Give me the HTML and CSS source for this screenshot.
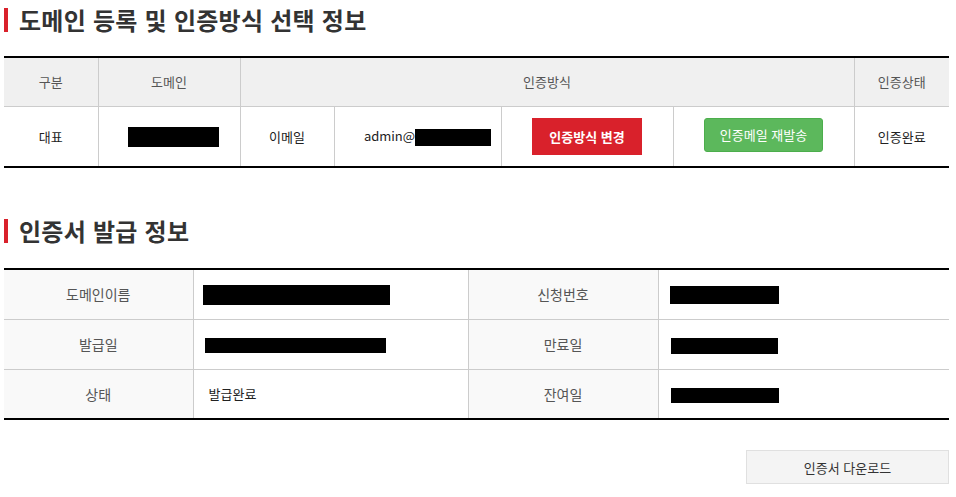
FILE: index.html
```html
<!DOCTYPE html>
<html lang="ko">
<head>
  <meta charset="UTF-8">
  <title>인증서 정보</title>
  <link rel="stylesheet" href="styles.css">
</head>
<body>

  <div class="page">
    <h2 class="sec-title">도메인 등록 및 인증방식 선택 정보</h2>
    <table class="grid auth">
      <colgroup>
        <col style="width: 94px">
        <col style="width: 142px">
        <col style="width: 94px">
        <col style="width: 167px">
        <col style="width: 172px">
        <col style="width: 181px">
        <col>
      </colgroup>
      <thead>
        <tr>
          <th>구분</th>
          <th>도메인</th>
          <th colspan="4">인증방식</th>
          <th>인증상태</th>
        </tr>
      </thead>
      <tbody>
        <tr>
          <td>대표</td>
          <td><span class="mask" style="width: 91px; margin-left: 8px"></span></td>
          <td>이메일</td>
          <td class="mail">admin@<span class="mask" style="width: 76px; height: 17px"></span></td>
          <td><button class="btn btn-red">인증방식 변경</button></td>
          <td><button class="btn btn-green">인증메일 재발송</button></td>
          <td>인증완료</td>
        </tr>
      </tbody>
    </table>

    <h2 class="sec-title second">인증서 발급 정보</h2>
    <table class="grid cert">
      <colgroup>
        <col style="width: 189px">
        <col style="width: 275px">
        <col style="width: 190px">
        <col>
      </colgroup>
      <tbody>
        <tr>
          <th>도메인이름</th>
          <td><span class="mask" style="width: 187px; margin-left: -6px"></span></td>
          <th>신청번호</th>
          <td><span class="mask" style="width: 109px; height: 18px; margin-left: -4px"></span></td>
        </tr>
        <tr>
          <th>발급일</th>
          <td><span class="mask" style="width: 181px; height: 15px; margin-left: -4px"></span></td>
          <th>만료일</th>
          <td><span class="mask" style="width: 107px; height: 16px; margin-left: -3px"></span></td>
        </tr>
        <tr>
          <th>상태</th>
          <td>발급완료</td>
          <th>잔여일</th>
          <td><span class="mask" style="width: 108px; height: 15px; margin-left: -3px"></span></td>
        </tr>
      </tbody>
    </table>

    <div class="actions">
      <button class="btn btn-plain">인증서 다운로드</button>
    </div>
  </div>

</body>
</html>
```

FILE: styles.css
```css
* {
  box-sizing: border-box;
}

html, body {
  margin: 0;
  background: #fff;
  font-family: "Noto Sans CJK KR", "Noto Sans", sans-serif;
  color: #333;
}

.page {
  width: 949px;
  padding: 8px 0 0 4px;
}

.sec-title {
  margin: 0;
  height: 24px;
  line-height: 24px;
  padding-left: 11px;
  border-left: 4px solid #d9212b;
  font-size: 24px;
  font-weight: 700;
  letter-spacing: 0.25px;
  color: #333;
}

.sec-title.second {
  margin-top: 51px;
}

.grid {
  width: 100%;
  border-collapse: collapse;
  table-layout: fixed;
  border-top: 2px solid #000;
  border-bottom: 2px solid #000;
  margin-top: 24px;
}

.grid th,
.grid td {
  border: 1px solid #ccc;
  font-size: 13px;
  text-align: center;
  padding: 0;
}

.grid tr > :first-child {
  border-left: none;
}

.grid tr > :last-child {
  border-right: none;
}

.grid th {
  font-weight: 400;
  color: #555;
}

.auth th {
  height: 49px;
  background: #f0f0f0;
}

.auth td {
  height: 61px;
  color: #222;
}

.auth td.mail {
  padding-left: 20px;
}

.cert {
  margin-top: 25px;
}

.cert th {
  height: 50px;
  background: #f9f9f9;
  font-size: 14px;
}

.cert td {
  text-align: left;
  padding-left: 15px;
  color: #222;
}

.mask {
  display: inline-block;
  width: 100px;
  height: 20px;
  background: #000;
  vertical-align: middle;
}

.btn {
  font-family: inherit;
  font-size: 13px;
  border: none;
  cursor: pointer;
  color: #fff;
}

.btn-red {
  width: 110px;
  height: 37px;
  background: #d9212b;
  font-weight: 700;
}

.btn-green {
  width: 119px;
  height: 34px;
  background: #5cb85c;
  border: 1px solid #4cae4c;
  border-radius: 3px;
  margin-top: -3px;
}

.actions {
  display: flex;
  justify-content: flex-end;
  margin-top: 30px;
}

.btn-plain {
  width: 203px;
  height: 34px;
  background: #f4f4f4;
  border: 1px solid #e0e0e0;
  color: #333;
}
```
